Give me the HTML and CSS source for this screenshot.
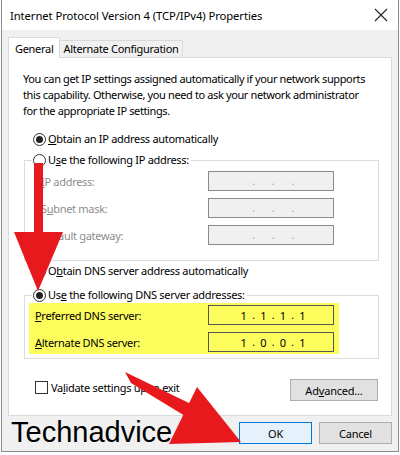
FILE: index.html
```html
<!DOCTYPE html>
<html lang="en">
  <head>
    <meta charset="UTF-8" />
    <title>Internet Protocol Version 4 (TCP/IPv4) Properties</title>
    <link rel="stylesheet" href="styles.css">
  </head>
  <body>
    <div class="window">
      <div class="titlebar">
        <span class="title">Internet Protocol Version 4 (TCP/IPv4) Properties</span>
        <svg class="close" width="14" height="14" viewBox="0 0 14 14">
          <path d="M1 1 L13 13 M13 1 L1 13" stroke="#222" stroke-width="1.1" fill="none" />
        </svg>
      </div>

      <div class="dialog">
        <div class="tab-container">
          <div class="tab active">General</div>
          <div class="tab">Alternate Configuration</div>
        </div>

        <div class="panel">
          <p class="intro">
            You can get IP settings assigned automatically if your network supports<br>
            this capability. Otherwise, you need to ask your network administrator<br>
            for the appropriate IP settings.
          </p>

          <div class="radio-row">
            <span class="radio checked"></span>
            <span><u>O</u>btain an IP address automatically</span>
          </div>

          <fieldset class="group">
            <legend class="radio-row">
              <span class="radio"></span>
              <span>U<u>s</u>e the following IP address:</span>
            </legend>
            <div class="field-row">
              <span class="label disabled"><u>I</u>P address:</span>
              <span class="ip-box disabled"><i>.</i><i>.</i><i>.</i></span>
            </div>
            <div class="field-row">
              <span class="label disabled">S<u>u</u>bnet mask:</span>
              <span class="ip-box disabled"><i>.</i><i>.</i><i>.</i></span>
            </div>
            <div class="field-row">
              <span class="label disabled"><u>D</u>efault gateway:</span>
              <span class="ip-box disabled"><i>.</i><i>.</i><i>.</i></span>
            </div>
          </fieldset>

          <div class="radio-row dns-auto">
            <span class="radio"></span>
            <span>O<u>b</u>tain DNS server address automatically</span>
          </div>

          <fieldset class="group dns">
            <legend class="radio-row">
              <span class="radio checked"></span>
              <span>Us<u>e</u> the following DNS server addresses:</span>
            </legend>
            <div class="highlight">
              <div class="field-row">
                <span class="label"><u>P</u>referred DNS server:</span>
                <span class="ip-box"><b>1</b><i>.</i><b>1</b><i>.</i><b>1</b><i>.</i><b>1</b></span>
              </div>
              <div class="field-row">
                <span class="label"><u>A</u>lternate DNS server:</span>
                <span class="ip-box"><b>1</b><i>.</i><b>0</b><i>.</i><b>0</b><i>.</i><b>1</b></span>
              </div>
            </div>
          </fieldset>

          <div class="options-row">
            <div class="check-row">
              <span class="checkbox"></span>
              <span>Va<u>l</u>idate settings upon exit</span>
            </div>
            <button class="btn advanced">Ad<u>v</u>anced...</button>
          </div>
        </div>

        <div class="footer">
          <span class="watermark">Technadvice</span>
          <button class="btn ok">OK</button>
          <button class="btn">Cancel</button>
        </div>
      </div>

      <svg class="arrows" width="400" height="455" viewBox="0 0 400 455">
        <rect x="33" y="163" width="9" height="72" fill="#e8191c" />
        <polygon points="13,232 62,232 37,291" fill="#e8191c" />
        <polygon points="124,372 130,383 184,416 190,404" fill="#e8191c" />
        <polygon points="196,387 168,444 240,442" fill="#e8191c" />
      </svg>
    </div>
  </body>
</html>
```

FILE: styles.css
```css
body {
  margin: 0;
  font-family: "Noto Sans", "Open Sans", sans-serif;
  font-size: 11px;
  color: #000;
  background: #fff;
}

.window {
  position: relative;
  width: 396px;
  height: 451px;
  border-left: 1px solid #8a8a8a;
  border-right: 1px solid #8a8a8a;
  border-bottom: 1px solid #8a8a8a;
  margin-left: 1px;
  background: #f0f0f0;
  overflow: hidden;
}

.titlebar {
  display: flex;
  align-items: center;
  justify-content: space-between;
  height: 30px;
  padding: 0 8px 0 8px;
  background: #fff;
  font-size: 11.3px;
  letter-spacing: -0.1px;
}

.close {
  margin-right: 2px;
}

.dialog {
  padding: 7px 6px 0 6px;
  letter-spacing: -0.3px;
}

.tab-container {
  display: flex;
  align-items: flex-end;
  height: 20px;
  position: relative;
  z-index: 1;
}

.tab {
  height: 16px;
  line-height: 15px;
  padding: 0 3px;
  border: 1px solid #d9d9d9;
  border-bottom: none;
  background: #f0f0f0;
}

.tab.active {
  height: 20px;
  line-height: 21px;
  padding: 0 6px;
  background: #fff;
  margin-bottom: -1px;
}

.tab + .tab {
  border-left: none;
}

.panel {
  height: 344px;
  border: 1px solid #d9d9d9;
  background: #fff;
  padding: 13px 8px 0 14px;
}

.intro {
  margin: 0;
  line-height: 16px;
  white-space: nowrap;
  letter-spacing: -0.38px;
}

.radio-row {
  display: flex;
  align-items: center;
  gap: 2px;
  line-height: 16px;
}

.panel > .radio-row {
  margin: 12px 0 0 10px;
}

.panel > .dns-auto {
  margin-top: 2px;
}

.radio {
  width: 11px;
  height: 11px;
  border: 1px solid #333;
  border-radius: 50%;
  position: relative;
}

.radio.checked::after {
  content: "";
  position: absolute;
  left: 2px;
  top: 2px;
  width: 7px;
  height: 7px;
  border-radius: 50%;
  background: #222;
}

.group {
  margin: 5px 0 0 1px;
  width: 355px;
  padding: 3px 0 8px 0;
  border: 1px solid #dcdcdc;
  box-sizing: border-box;
}

.group legend {
  margin-left: 7px;
  padding: 0 2px 0 1px;
}

.field-row {
  display: flex;
  align-items: center;
  justify-content: space-between;
  height: 20px;
  padding: 0 44px 0 16px;
  margin-bottom: 7px;
}

.label.disabled {
  color: #8d8d8d;
}

.ip-box {
  display: flex;
  justify-content: space-evenly;
  align-items: center;
  height: 18px;
  border: 1px solid #7a7a7a;
  padding: 0 22px 0 26px;
  width: 76px;
}

.ip-box.disabled {
  background: #f0f0f0;
  border-color: #8a8a8a;
  color: #9a9a9a;
}

.ip-box i {
  font-style: normal;
  font-size: 10px;
}

.ip-box b {
  font-weight: normal;
}

.dns {
  margin-top: 8px;
  padding: 0 0 4px 0;
}

.highlight {
  background: #fcfc5c;
  margin: 0 39px 0 4px;
  padding: 2px 0 2px 0;
}

.highlight .field-row {
  padding: 0 5px 0 6px;
  margin: 0;
}

.highlight .field-row + .field-row {
  margin-top: 7px;
}

.highlight .ip-box {
  background: #fcfc5c;
  border-color: #555;
}

.options-row {
  display: flex;
  align-items: center;
  justify-content: space-between;
  margin-top: 20px;
  padding: 0 0 0 12px;
  margin-right: 5px;
}

.check-row {
  display: flex;
  align-items: center;
  gap: 3px;
  margin-top: -6px;
}

.checkbox {
  width: 11px;
  height: 11px;
  border: 1px solid #333;
  background: #fff;
}

.btn {
  font-family: inherit;
  font-size: 11px;
  letter-spacing: -0.2px;
  height: 22px;
  width: 73px;
  padding: 0;
  border: 1px solid #adadad;
  background: #e1e1e1;
  color: #000;
}

.advanced {
  width: 88px;
}

.footer {
  display: flex;
  align-items: center;
  gap: 7px;
  height: 38px;
  margin-top: -2px;
}

.watermark {
  font-family: "Liberation Sans", sans-serif;
  font-size: 29px;
  letter-spacing: 0;
  margin-right: auto;
  margin-left: 3px;
  margin-top: -2px;
}

.ok {
  background: #e5f1fb;
  border-color: #0078d7;
}

.arrows {
  position: absolute;
  left: -1px;
  top: 0;
  pointer-events: none;
}
```
